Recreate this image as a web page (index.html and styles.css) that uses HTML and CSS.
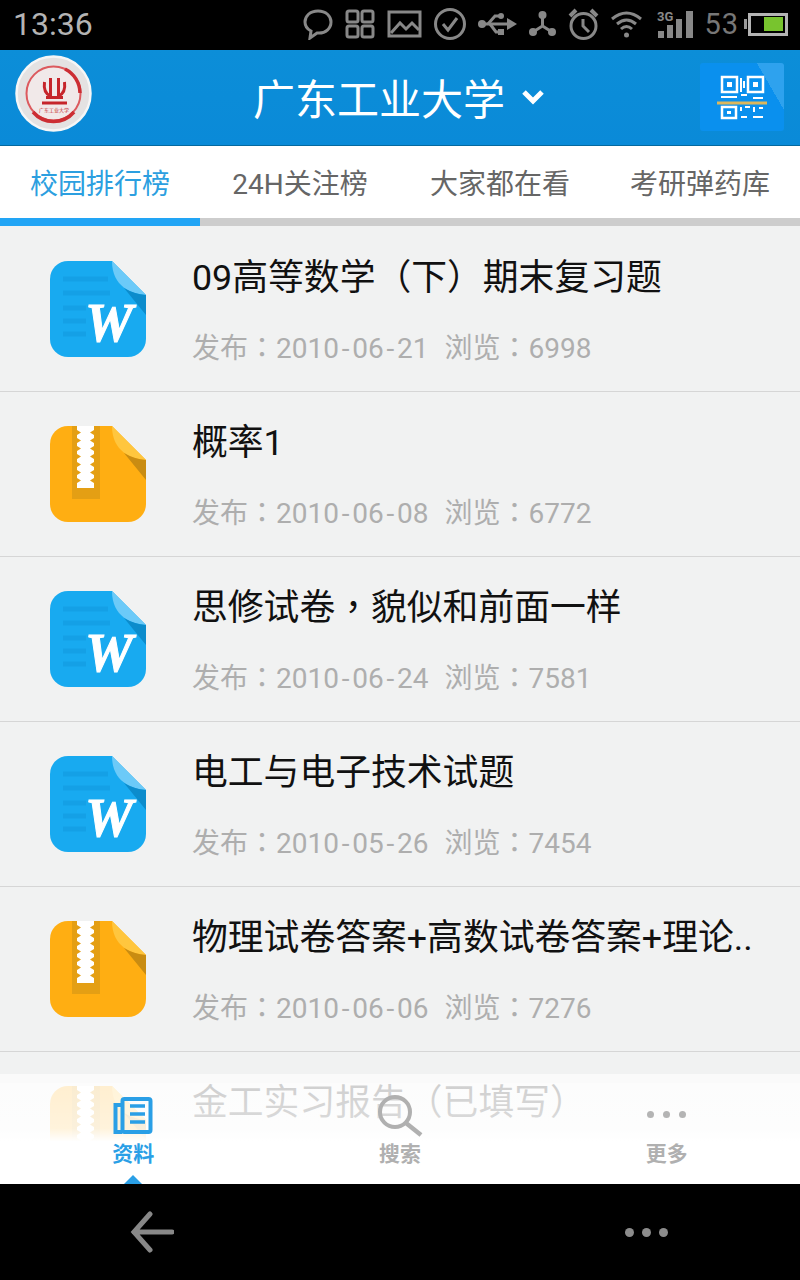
FILE: index.html
```html
<!DOCTYPE html>
<html lang="zh-TW">
<head>
  <meta charset="UTF-8">
  <meta name="viewport" content="width=device-width, initial-scale=1.0">
  <title>校园排行榜</title>
  <link rel="stylesheet" href="styles.css">
</head>
<body>
  <svg class="defs" width="0" height="0">
    <symbol id="doc-icon" viewBox="0 0 96 96">
      <path d="M18 0H62L96 34V78A18 18 0 0 1 78 96H18A18 18 0 0 1 0 78V18A18 18 0 0 1 18 0Z" fill="#18aaf0"/>
      <path d="M62 0L96 34C82 33 62 26 62 0Z" fill="#6ccaf8"/>
      <path d="M74 27Q84 33 96 34V54Z" fill="#0c8ccc"/>
      <path d="M13 18H58M13 32H60M13 47H36M13 60H36M13 73H36" stroke="#14a0e6" stroke-width="5"/>
    </symbol>
    <symbol id="zip-icon" viewBox="0 0 96 96">
      <path d="M18 0H62L96 34V78A18 18 0 0 1 78 96H18A18 18 0 0 1 0 78V18A18 18 0 0 1 18 0Z" fill="#ffae12"/>
      <path d="M62 0L96 34C82 33 62 26 62 0Z" fill="#ffc63e"/>
      <path d="M74 27Q84 33 96 34V54Z" fill="#c98c12"/>
      <rect x="22" y="0" width="28" height="73" fill="#e49f14"/>
      <path d="M27 0H44V4L40 6.500L44 9V12L40 14.500L44 17V20L40 22.500L44 25V28L40 30.500L44 33V36L40 38.500L44 41V44L40 46.500L44 49V52L40 54.500L44 57V62H27V57L31 54.500L27 52V49L31 46.500L27 44V41L31 38.500L27 36V33L31 30.500L27 28V25L31 22.500L27 20V17L31 14.500L27 12V9L31 6.500L27 4Z" fill="#fff"/>
    </symbol>
  </svg>

  <div class="phone">
    <div class="status-bar">
      <span class="clock">13:36</span>
      <div class="status-icons">
        <svg width="30" height="32" viewBox="0 0 30 32"><path d="M15 3C7 3 2 8 2 14C2 18 4 21 8 23L7 30L14 25C23 26 28 20 28 14C28 8 23 3 15 3Z" fill="none" stroke="#888" stroke-width="3"/></svg>
        <svg width="30" height="30" viewBox="0 0 30 30" fill="none" stroke="#888" stroke-width="3"><rect x="2" y="2" width="11" height="11" rx="2"/><rect x="17" y="2" width="11" height="11" rx="2"/><rect x="2" y="17" width="11" height="11" rx="2"/><rect x="17" y="17" width="11" height="11" rx="2"/></svg>
        <svg width="35" height="28" viewBox="0 0 35 28" fill="none" stroke="#888" stroke-width="3"><rect x="2" y="2" width="31" height="24"/><path d="M4 23L13 13L19 19L25 13L32 20"/></svg>
        <svg width="32" height="32" viewBox="0 0 32 32" fill="none" stroke="#888" stroke-width="3"><circle cx="16" cy="16" r="14.500"/><path d="M9 16L14 22L23 10"/></svg>
        <svg width="39" height="26" viewBox="0 0 39 26" fill="#888"><circle cx="4" cy="13" r="4"/><path d="M4 13H31" stroke="#888" stroke-width="3"/><path d="M29 7L39 13L29 19Z"/><path d="M10 13L17 5H22M12 13L18 21H22" fill="none" stroke="#888" stroke-width="3"/><circle cx="23" cy="5" r="3"/><rect x="20" y="18" width="6" height="6"/></svg>
        <svg width="27" height="26" viewBox="0 0 27 26" fill="#888"><circle cx="13.500" cy="4" r="4"/><circle cx="4" cy="21" r="4"/><circle cx="23" cy="21" r="4"/><path d="M13.500 4V15L4 21M13.500 15L23 21" fill="none" stroke="#888" stroke-width="3"/></svg>
        <svg width="31" height="32" viewBox="0 0 31 32" fill="none" stroke="#888" stroke-width="3"><circle cx="15.500" cy="18" r="12.500"/><path d="M15 11V18L21 24"/><path d="M2 8L8 2M29 8L23 2" stroke-width="4"/></svg>
        <svg width="31" height="28" viewBox="0 0 31 28" fill="none" stroke="#888" stroke-width="3"><path d="M1 9Q15.500 -3 30 9M6 14Q15.500 6 25 14M10 19Q15.500 14 21 19"/><circle cx="15.500" cy="25" r="2.500" fill="#888" stroke="none"/></svg>
        <svg class="signal" width="37" height="30" viewBox="0 0 37 30" fill="#888"><rect x="1" y="22" width="6" height="7"/><rect x="10" y="16" width="6" height="13"/><rect x="19" y="10" width="6" height="19"/><rect x="29" y="2" width="7" height="27"/><text class="signal-3g" x="0" y="12">3G</text></svg>
        <span class="battery-num">53</span>
        <div class="battery"><span class="battery-cap"></span><div class="battery-body"><span class="battery-fill"></span></div></div>
      </div>
    </div>

    <header class="app-header">
      <svg class="logo" width="78" height="78" viewBox="0 0 78 78">
        <circle cx="38.500" cy="38.500" r="37" fill="#e4e2e2" stroke="#f6f6f6" stroke-width="2.500"/>
        <circle cx="38.500" cy="38.500" r="27" fill="#f1e9e9" stroke="#dc5a5e" stroke-width="2"/>
        <path d="M50 14A27 27 0 0 1 65 38M18 57A27 27 0 0 0 59 57" fill="none" stroke="#cc2d33" stroke-width="3.500"/>
        <path d="M35.500 23V41M43.500 23V41M29.500 27Q28 38 35.500 41M49.500 27Q51 38 43.500 41M31 42.500H48M27 48H52" fill="none" stroke="#c6252b" stroke-width="3"/>
        <text class="logo-name" x="39" y="57">广东工业大学</text>
      </svg>
      <div class="school">
        <span class="school-name">广东工业大学</span>
        <svg width="22" height="16" viewBox="0 0 22 16"><path d="M2 3L11 12L20 3" fill="none" stroke="#fff" stroke-width="5"/></svg>
      </div>
      <div class="scan-btn">
        <svg width="50" height="46" viewBox="0 0 50 46" fill="none" stroke="#fff" stroke-width="2.500">
          <rect x="5" y="3" width="15" height="15"/><rect x="31" y="3" width="15" height="15"/><rect x="5" y="33" width="14" height="11"/>
          <path d="M10 8H15V13H10ZM36 8H41V13H36ZM10 37H14V40H10Z" fill="#fff" stroke="none"/>
          <path d="M24 4V18M27 7V14M4 23H20M24 21H30M36 24H46M24 33V37M28 33H33M37 33V38M42 34H46M24 43H30M36 43H46" stroke-width="2"/>
          <path d="M0 29H50" stroke="#dcb75c" stroke-width="3"/>
        </svg>
      </div>
    </header>

    <nav class="tabs">
      <a class="tab tab-active">校园排行榜</a>
      <a class="tab">24H关注榜</a>
      <a class="tab">大家都在看</a>
      <a class="tab">考研弹药库</a>
    </nav>

    <div class="list-wrap">
      <ul class="file-list">
        <li class="file-row">
          <svg class="file-icon" viewBox="0 0 96 96"><use href="#doc-icon"/><text class="doc-w" x="35" y="80">W</text></svg>
          <div class="file-info">
            <div class="file-title">09高等数学（下）期末复习题</div>
            <div class="file-meta"><span>发布：2010<i class="dash">-</i>06<i class="dash">-</i>21</span><span>浏览：6998</span></div>
          </div>
        </li>
        <li class="file-row">
          <svg class="file-icon" viewBox="0 0 96 96"><use href="#zip-icon"/></svg>
          <div class="file-info">
            <div class="file-title">概率1</div>
            <div class="file-meta"><span>发布：2010<i class="dash">-</i>06<i class="dash">-</i>08</span><span>浏览：6772</span></div>
          </div>
        </li>
        <li class="file-row">
          <svg class="file-icon" viewBox="0 0 96 96"><use href="#doc-icon"/><text class="doc-w" x="35" y="80">W</text></svg>
          <div class="file-info">
            <div class="file-title">思修试卷，貌似和前面一样</div>
            <div class="file-meta"><span>发布：2010<i class="dash">-</i>06<i class="dash">-</i>24</span><span>浏览：7581</span></div>
          </div>
        </li>
        <li class="file-row">
          <svg class="file-icon" viewBox="0 0 96 96"><use href="#doc-icon"/><text class="doc-w" x="35" y="80">W</text></svg>
          <div class="file-info">
            <div class="file-title">电工与电子技术试题</div>
            <div class="file-meta"><span>发布：2010<i class="dash">-</i>05<i class="dash">-</i>26</span><span>浏览：7454</span></div>
          </div>
        </li>
        <li class="file-row">
          <svg class="file-icon" viewBox="0 0 96 96"><use href="#zip-icon"/></svg>
          <div class="file-info">
            <div class="file-title">物理试卷答案+高数试卷答案+理论..</div>
            <div class="file-meta"><span>发布：2010<i class="dash">-</i>06<i class="dash">-</i>06</span><span>浏览：7276</span></div>
          </div>
        </li>
        <li class="file-row">
          <svg class="file-icon" viewBox="0 0 96 96"><use href="#zip-icon"/></svg>
          <div class="file-info">
            <div class="file-title">金工实习报告（已填写）</div>
          </div>
        </li>
      </ul>

      <div class="bottom-tabs">
        <a class="bottom-tab bottom-tab-active">
          <svg class="tab-icon-doc" width="40" height="40" viewBox="0 0 40 40" fill="none" stroke="#2a9fe6" stroke-width="4"><rect x="9.500" y="3" width="28" height="33" rx="2"/><path d="M9 9H2.500V36H9"/><path d="M17 10H32M17 18H32M17 26H32" stroke-width="3.500"/></svg>
          <span>资料</span>
          <i class="tab-arrow"></i>
        </a>
        <a class="bottom-tab">
          <svg class="tab-icon-search" width="46" height="46" viewBox="0 0 46 46" fill="none" stroke="#b0b0b0"><circle cx="18" cy="19" r="15" stroke-width="4"/><path d="M29 30L44 42" stroke-width="4.500"/></svg>
          <span>搜索</span>
        </a>
        <a class="bottom-tab">
          <div class="tab-dots"><i></i><i></i><i></i></div>
          <span>更多</span>
        </a>
      </div>
    </div>

    <footer class="nav-bar">
      <svg width="44" height="42" viewBox="0 0 44 42" fill="none" stroke="#888" stroke-width="5" stroke-linecap="round"><path d="M42 21H4M20 3L4 21L20 39"/></svg>
      <div class="nav-dots"><i></i><i></i><i></i></div>
    </footer>
  </div>
</body>
</html>
```

FILE: styles.css
```css
* {
  box-sizing: border-box;
}
body {
  margin: 0;
  font-family: "Roboto", "Noto Sans CJK TC", sans-serif;
  background: #000;
}
.defs {
  display: block;
  height: 0;
}
.doc-w {
  font-family: "Liberation Serif", serif;
  font-weight: bold;
  font-style: italic;
  font-size: 54px;
  fill: #fff;
  stroke: #fff;
  stroke-width: 1px;
}
.phone {
  width: 800px;
  height: 1280px;
  display: flex;
  flex-direction: column;
  overflow: hidden;
}

/* status bar */
.status-bar {
  height: 50px;
  background: #000;
  display: flex;
  align-items: center;
  justify-content: space-between;
  padding: 0 12px 2px 13px;
  color: #999;
}
.clock {
  font-size: 32px;
  color: #b4b4b4;
}
.status-icons {
  display: flex;
  align-items: center;
  gap: 12px;
}
.signal {
  margin-left: 3px;
}
.signal-3g {
  font-size: 13px;
  font-weight: bold;
}
.battery-num {
  font-size: 29px;
  color: #777;
  margin-left: -2px;
  letter-spacing: 1px;
}
.battery {
  display: flex;
  align-items: center;
  margin-left: -7px;
}
.battery-cap {
  width: 3px;
  height: 10px;
  background: #999;
}
.battery-body {
  width: 40px;
  height: 23px;
  border: 3px solid #b4b4b4;
  background: #000;
  margin-left: 1px;
  padding: 1px 2px 2px 13px;
}
.battery-fill {
  display: block;
  height: 100%;
  background: #78c42e;
}

/* blue header */
.app-header {
  height: 96px;
  background: linear-gradient(#0c8ed8, #0a8ad8);
  border-bottom: 1px solid #05699f;
  display: flex;
  align-items: center;
  padding: 0 16px 0 15px;
  flex-shrink: 0;
}
.logo {
  margin-bottom: 7px;
}
.logo-name {
  font-family: "Noto Sans CJK SC", sans-serif;
  font-size: 5px;
  fill: #c6252b;
  text-anchor: middle;
}
.school {
  flex: 1;
  display: flex;
  align-items: center;
  justify-content: center;
  gap: 17px;
  color: #fff;
  margin-left: 4px;
  padding-bottom: 2px;
}
.school-name {
  font-size: 42px;
  font-family: "Noto Sans CJK SC", sans-serif;
}
.scan-btn {
  width: 84px;
  height: 68px;
  background: linear-gradient(60deg, #0a90ee 78%, #2ea2ee 78%);
  border-radius: 3px;
  display: flex;
  align-items: center;
  justify-content: center;
  margin-bottom: 2px;
}

/* top tabs */
.tabs {
  display: flex;
  height: 80px;
  background: #fff;
  border-bottom: 8px solid #cdcdcd;
  flex-shrink: 0;
}
.tab {
  flex: 1;
  display: flex;
  align-items: center;
  justify-content: center;
  font-size: 28px;
  color: #666;
  height: 80px;
  padding-bottom: 8px;
}
.tab-active {
  color: #2c9fe0;
  border-bottom: 8px solid #22a5f5;
  padding-bottom: 0;
}

/* file list */
.list-wrap {
  flex: 1;
  position: relative;
  overflow: hidden;
  background: #f1f2f2;
}
.file-list {
  list-style: none;
  margin: 0;
  padding: 1px 0 0;
}
.file-row {
  height: 165px;
  border-bottom: 1px solid #d6d6d6;
  display: flex;
  align-items: flex-start;
  padding: 34px 0 0 50px;
}
.file-icon {
  width: 96px;
  height: 96px;
  flex-shrink: 0;
}
.file-info {
  margin-left: 46px;
  margin-top: -10px;
}
.file-title {
  font-size: 35.800px;
  line-height: 54px;
  color: #111;
  white-space: nowrap;
}
.file-meta {
  display: flex;
  gap: 16px;
  margin-top: 24px;
  font-size: 28px;
  line-height: 40px;
  color: #aeaeae;
}
.dash {
  font-style: normal;
  margin: 0 2.750px;
}

/* bottom tabs, lies over the list */
.bottom-tabs {
  position: absolute;
  left: 0;
  right: 0;
  bottom: 0;
  height: 110px;
  display: flex;
  background: linear-gradient(rgba(255, 255, 255, 0.8), rgba(255, 255, 255, 0.85) 45%, #fff 58%);
  border-top: 9px solid #fafafa;
}
.bottom-tab {
  flex: 1;
  position: relative;
  display: flex;
  flex-direction: column;
  align-items: center;
  justify-content: flex-end;
  padding-bottom: 17px;
  font-size: 21px;
  font-weight: bold;
  color: #b0b0b0;
}
.tab-icon-doc {
  position: absolute;
  top: 13px;
}
.tab-icon-search {
  position: absolute;
  top: 10px;
}
.bottom-tab-active {
  color: #2a9fe6;
}
.tab-arrow {
  position: absolute;
  bottom: 0;
  width: 0;
  height: 0;
  border-left: 9px solid transparent;
  border-right: 9px solid transparent;
  border-bottom: 9px solid #2a9fe6;
}
.tab-dots {
  position: absolute;
  top: 28px;
  display: flex;
  gap: 9px;
}
.tab-dots i {
  width: 7px;
  height: 7px;
  border-radius: 50%;
  background: #b4b4b4;
}

/* android nav bar */
.nav-bar {
  height: 96px;
  background: #000;
  display: flex;
  align-items: center;
  justify-content: space-between;
  padding: 0 132px 0 130px;
  flex-shrink: 0;
}
.nav-dots {
  display: flex;
  gap: 8px;
}
.nav-dots i {
  width: 9px;
  height: 9px;
  border-radius: 50%;
  background: #8c8c8c;
}
```
